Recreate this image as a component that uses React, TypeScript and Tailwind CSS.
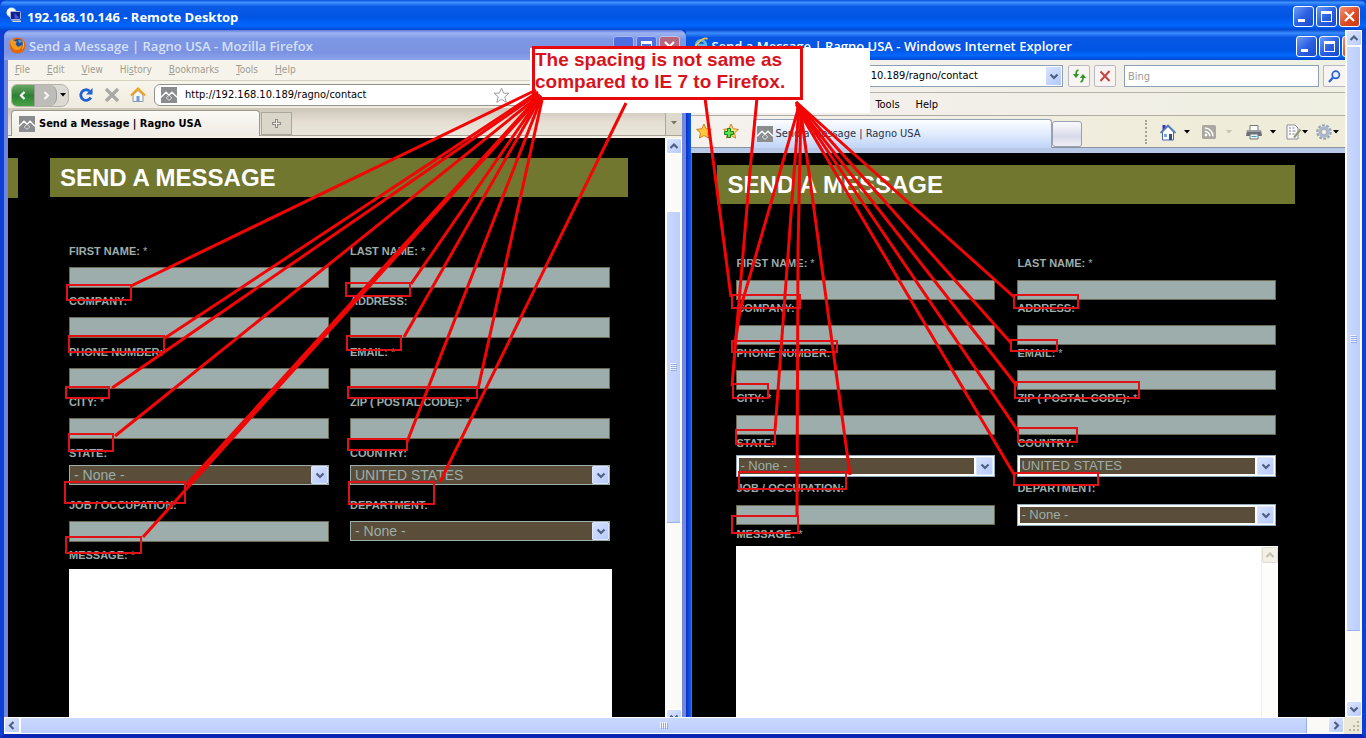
import React from "react";

const UI = "font-['DejaVu_Sans_Condensed','DejaVu_Sans',sans-serif]";
const CAPTION = "font-['Open_Sans','Noto_Sans',sans-serif]";
const ARIAL = "font-['Liberation_Sans',Arial,sans-serif]";

/* ---------- small drawings ---------- */

function SiteIcon() {
  return (
    <svg width="16" height="16" viewBox="0 0 16 16" className="shrink-0" aria-hidden="true">
      <rect width="16" height="16" fill="#8b8c8e" />
      <path d="M0 10.200 5 5.200 8 8.200 11 5.200 16 10.200" fill="none" stroke="#fff" strokeWidth="1.400" />
      <path d="M5.200 11 8 8.200 10.800 11 8 13.400z" fill="none" stroke="#dcdcdc" strokeWidth="1" />
    </svg>
  );
}

function Chevron({ dir = "down", color = "#4d6185" }: { dir?: "up" | "down" | "left" | "right"; color?: string }) {
  const d = {
    down: "M1.500 2.500 5 6l3.500-3.500",
    up: "M1.500 6 5 2.500 8.500 6",
    left: "M6.500 1 3 4.500 6.500 8",
    right: "M3.500 1 7 4.500 3.500 8",
  }[dir];
  return (
    <svg width="10" height="9" viewBox="0 0 10 9" className="shrink-0" aria-hidden="true">
      <path d={d} fill="none" stroke={color} strokeWidth="2.200" />
    </svg>
  );
}

function Caret({ color = "#000" }: { color?: string }) {
  return (
    <svg width="6" height="4" viewBox="0 0 6 4" className="shrink-0" aria-hidden="true">
      <path d="M0 0h6L3 3.500z" fill={color} />
    </svg>
  );
}

function RemoteIcon() {
  return (
    <svg width="16" height="16" viewBox="0 0 16 16" aria-hidden="true">
      <circle cx="5.500" cy="5.500" r="5" fill="#d3e8dc" />
      <path d="M1 4c2-3.500 6-3.500 8-.5L5 8 1.500 8z" fill="#fff" />
      <rect x="4.500" y="4.500" width="10" height="8" rx="1" fill="#14208a" stroke="#a9b4e0" />
      <path d="M8.500 6v5.500h5.500z" fill="#3d55d8" />
      <path d="M5 13.500h10V15H7z" fill="#d8d4c8" />
    </svg>
  );
}

function FirefoxIcon() {
  return (
    <svg width="17" height="17" viewBox="0 0 17 17" aria-hidden="true">
      <circle cx="8.500" cy="8.500" r="8" fill="#e2660e" />
      <circle cx="9" cy="7" r="5" fill="#1d4f9c" />
      <path d="M9 2.500c2 0 3.500 1 4.300 2.500L10 6z" fill="#4fa0dd" />
      <path d="M1 4 3 1.500 4.500 4 8 4.500 6.500 7l2 2.500c2 .5 3-.5 4-2 1 3-1.500 5.500-4.500 5.500C4.500 13 2 10 1 4z" fill="#f39a1e" />
      <path d="M13.500 3c2 3 2 7-.5 9.500 1-3 1.200-6 .5-9.500z" fill="#fbd03c" />
    </svg>
  );
}

function IeIcon() {
  return (
    <svg width="16" height="16" viewBox="0 0 16 16" aria-hidden="true">
      <path d="M12.500 10.500A5 5 0 1 1 13 8H5" fill="none" stroke="#5db5f2" strokeWidth="2.600" />
      <path d="M2 14C-.5 11 9-.5 14.500 1.800" fill="none" stroke="#f4c63a" strokeWidth="1.800" />
    </svg>
  );
}

function Star({ plus = false }: { plus?: boolean }) {
  return (
    <svg width="16" height="17" viewBox="0 0 16 17" aria-hidden="true">
      <path d="M8 1l2.200 4.800 5.200.6-3.900 3.500 1.100 5.200L8 12.500l-4.600 2.600 1.100-5.200L.6 6.400l5.200-.6z" fill={plus ? "#ffe08a" : "#ffc83d"} stroke="#c9831c" strokeWidth="1" />
      {plus && <path d="M4.500 5.500h3v3h3v3h-3v3h-3v-3h-3v-3h3z" fill="#5fe054" stroke="#14821a" strokeWidth="1" />}
    </svg>
  );
}

function Reload() {
  return (
    <svg width="16" height="16" viewBox="0 0 16 16" aria-hidden="true">
      <path d="M12.800 10.500A5.300 5.300 0 1 1 11.500 4" fill="none" stroke="#1f62d2" strokeWidth="2.800" />
      <path d="M14.500 1v6.500H8z" fill="#1f62d2" />
    </svg>
  );
}

function StopCross() {
  return (
    <svg width="16" height="16" viewBox="0 0 16 16" aria-hidden="true">
      <path d="M2 2l12 12M14 2L2 14" stroke="#a9a9a5" strokeWidth="3.200" />
    </svg>
  );
}

function HomeFx() {
  return (
    <svg width="16" height="16" viewBox="0 0 16 16" aria-hidden="true">
      <path d="M3 8v6.500h10V8L8 3.500z" fill="#f7f5ef" stroke="#8b96a8" />
      <rect x="6.500" y="9" width="3" height="5.500" fill="#6d9be0" />
      <path d="M1 8.500 8 1.500l7 7" fill="none" stroke="#f0a41c" strokeWidth="2.200" />
    </svg>
  );
}

function HomeIe() {
  return (
    <svg width="16" height="17" viewBox="0 0 16 17" aria-hidden="true">
      <rect x="2.500" y="1" width="3" height="5" fill="#3434b8" />
      <path d="M2.500 8v8h11V8L8 2.500z" fill="#fff" stroke="#4c66a8" />
      <path d="M.5 9 8 1.500 15.500 9" fill="none" stroke="#4f79b8" strokeWidth="1.600" />
      <rect x="4" y="10" width="3" height="3" fill="#7ea6d8" />
      <rect x="9" y="10" width="3" height="6" fill="#2b4f9c" />
    </svg>
  );
}

function Rss() {
  return (
    <svg width="14" height="14" viewBox="0 0 14 14" aria-hidden="true">
      <rect width="14" height="14" rx="1.500" fill="#a9a89e" />
      <circle cx="4" cy="10" r="1.400" fill="#fff" />
      <path d="M2.800 6.200a5 5 0 0 1 5 5M2.800 3a8.200 8.200 0 0 1 8.200 8.200" fill="none" stroke="#fff" strokeWidth="1.400" />
    </svg>
  );
}

function Printer() {
  return (
    <svg width="16" height="15" viewBox="0 0 16 15" aria-hidden="true">
      <path d="M4 .5h8v5H4z" fill="#fff" stroke="#777" />
      <path d="M1 5h14l1 6H0z" fill="#6d6f74" />
      <rect x="1" y="5" width="14" height="2" fill="#9b9da1" />
      <path d="M4 9h8v5H4z" fill="#e8f2fb" stroke="#777" />
      <path d="M5.500 11.500h5" stroke="#39a8c8" />
    </svg>
  );
}

function PageIcon() {
  return (
    <svg width="16" height="16" viewBox="0 0 16 16" aria-hidden="true">
      <path d="M1 1h8l3 3v11H1z" fill="#fafafa" stroke="#8a8f9c" />
      <path d="M3 4h2M3 7h2M3 10h2M6.500 4h2M6.500 7h3M6.500 10h2" stroke="#7b7fa5" />
      <path d="M14.500 5.500 8 13.500" stroke="#9c9a78" strokeWidth="2.200" />
    </svg>
  );
}

function Gear() {
  return (
    <svg width="16" height="16" viewBox="0 0 16 16" aria-hidden="true">
      <circle cx="8" cy="8" r="6.700" fill="none" stroke="#94a2b5" strokeWidth="2.200" strokeDasharray="2.700 1.510" />
      <circle cx="8" cy="8" r="4.500" fill="#f2efe2" stroke="#a9b8cb" strokeWidth="2.600" />
      <circle cx="8" cy="8" r="2.900" fill="none" stroke="#73839a" strokeWidth=".7" />
    </svg>
  );
}

function RefreshIe() {
  return (
    <svg width="15" height="14" viewBox="0 0 15 14" aria-hidden="true">
      <path d="M6.500 1C4.500 1.500 4 3 4 5v1" fill="none" stroke="#2f9627" strokeWidth="1.600" />
      <path d="M.8 5h6.400L4 9z" fill="#2f9627" />
      <path d="M8.500 13c2-.5 2.500-2 2.500-4V8" fill="none" stroke="#2f9627" strokeWidth="1.600" />
      <path d="M7.800 9h6.400L11 5z" fill="#2f9627" />
    </svg>
  );
}

/* ---------- window parts ---------- */

type WinKind = "min" | "max" | "close";

function CaptionButton({ kind, faded = false }: { kind: WinKind; faded?: boolean }) {
  const tone =
    kind === "close"
      ? faded
        ? "bg-[#b8687e] border-[#b9c5f2]"
        : "bg-[linear-gradient(135deg,#f0957a,#dd4a22_55%,#c83c14)] border-white"
      : faded
        ? "bg-[#4f6fe0] border-[#a9b9f2]"
        : "bg-[linear-gradient(135deg,#6f9cf5,#2c61e2_50%,#1a49cf)] border-white";
  return (
    <button type="button" aria-label={kind} className={`flex size-[21px] shrink-0 items-center justify-center rounded-[3px] border ${tone}`}>
      <svg width="19" height="19" viewBox="0 0 19 19" aria-hidden="true">
        {kind === "min" && <rect x="4" y="12" width="7" height="3" fill="#fff" />}
        {kind === "max" && <path d="M4 4h11v11H4zM5 7v7h9V7z" fill="#fff" fillRule="evenodd" />}
        {kind === "close" && <path d="M5 5l9 9M14 5l-9 9" stroke="#fff" strokeWidth="2.200" />}
      </svg>
    </button>
  );
}

function ScrollButton({ dir, muted = false }: { dir: "up" | "down" | "left" | "right"; muted?: boolean }) {
  return (
    <button
      type="button"
      aria-label={`Scroll ${dir}`}
      className={`flex size-[16px] shrink-0 items-center justify-center rounded-[2px] border ${
        muted ? "border-[#dedbd0] bg-[#f1efe6]" : "border-white bg-[linear-gradient(135deg,#dbe5fd,#b9cbf9)]"
      }`}
    >
      <Chevron dir={dir} color={muted ? "#c3c0b4" : "#4d6185"} />
    </button>
  );
}

function VThumb() {
  return (
    <div className="flex w-full flex-1 items-center justify-center rounded-[2px] border border-white border-b-[#98b0e8] bg-[linear-gradient(90deg,#cad8fd,#bccefc)]">
      <svg width="7" height="8" viewBox="0 0 7 8" aria-hidden="true">
        <path d="M0 .5h6M0 2.500h6M0 4.500h6M0 6.500h6" stroke="#eef3ff" />
        <path d="M1 1.500h6M1 3.500h6M1 5.500h6M1 7.500h6" stroke="#93abe4" />
      </svg>
    </div>
  );
}

function SelectBox({ id, value, ie }: { id: string; value: string; ie: boolean }) {
  return (
    <div className={ie ? "flex h-[22px] w-full border border-[#8fa9bd] bg-white p-px" : "flex h-[20px] w-full border border-[#9cadab] bg-[#5a4d39]"}>
      <select
        id={id}
        defaultValue={value}
        className={`${ARIAL} min-w-0 flex-1 appearance-none bg-[#5a4d39] leading-4 text-[#9cadab] outline-none ${ie ? "m-px mr-0.5 pl-px text-[13px]" : "pl-1 text-[14px]"}`}
      >
        <option>{value}</option>
      </select>
      <span className="pointer-events-none flex w-[17px] items-center justify-center rounded-[1px] border border-[#dbe5fb] bg-[linear-gradient(135deg,#d5e1fd,#b7cafa)]">
        <Chevron />
      </span>
    </div>
  );
}

type FieldDef = { label: string; req?: boolean; select?: string };

function Field({ def, ie, pad, gap }: { def: FieldDef; ie: boolean; pad: string; gap: string }) {
  const id = `${ie ? "ie" : "fx"}-${def.label.toLowerCase().replace(/[^a-z]+/g, "-")}`;
  return (
    <div className={`flex flex-col ${pad}`}>
      <label htmlFor={id} className="block text-[11px] leading-4 font-bold">
        {def.label}:{def.req && <span className="font-normal"> *</span>}
      </label>
      <div className={`flex ${gap} ${ie ? "h-[22px] items-center" : "h-[21px] items-start"}`}>
        {def.select ? (
          <SelectBox id={id} value={def.select} ie={ie} />
        ) : (
          <input
            id={id}
            type="text"
            className={`w-full border border-[#6d6a55] bg-[#9cadab] px-1 text-[12px] text-black outline-none ${ie ? "h-[20px]" : "h-[21px]"}`}
          />
        )}
      </div>
    </div>
  );
}

const fields: FieldDef[] = [
  { label: "FIRST NAME", req: true },
  { label: "LAST NAME", req: true },
  { label: "COMPANY" },
  { label: "ADDRESS" },
  { label: "PHONE NUMBER" },
  { label: "EMAIL", req: true },
  { label: "CITY", req: true },
  { label: "ZIP ( POSTAL CODE)", req: true },
  { label: "STATE", select: "- None -" },
  { label: "COUNTRY", select: "UNITED STATES" },
  { label: "JOB / OCCUPATION" },
  { label: "DEPARTMENT", select: "- None -" },
];

const fxPad = ["pt-[5px]", "pt-[5px]", "pt-[5px]", "pt-[5px]", "pt-[5px]", "pt-[11px]"];
const iePad = ["pt-0", "pt-0", "pt-0", "pt-0", "pt-0", "pt-[3px]"];
const rowGap = ["mt-2", "mt-2", "mt-2", "mt-2", "mt-1", "mt-2"];

function ContactForm({ ie }: { ie: boolean }) {
  const pads = ie ? iePad : fxPad;
  return (
    <form className={`${ARIAL} ml-[19px] flex flex-1 flex-col text-[#9cadab] ${ie ? "w-[542px] pt-[51px]" : "w-[543px] pt-[41px]"}`}>
      <div
        className={`grid ${
          ie
            ? "grid-cols-[259px_259px] grid-rows-[45px_45px_45px_45px_42px_49px] gap-x-[22px]"
            : "grid-cols-[260px_260px] grid-rows-[50px_51px_50px_51px_46px_56px] gap-x-[21px]"
        }`}
      >
        {fields.map((f, i) => (
          <Field key={f.label} def={f} ie={ie} pad={pads[i >> 1]} gap={rowGap[i >> 1]} />
        ))}
      </div>
      <label htmlFor={ie ? "ie-message" : "fx-message"} className={`text-[11px] leading-4 font-bold ${ie ? "mb-1" : "mt-[5px] mb-1.5"}`}>
        MESSAGE:<span className="font-normal"> *</span>
      </label>
      <div className="flex min-h-[60px] flex-1 bg-white">
        <textarea id={ie ? "ie-message" : "fx-message"} className="min-w-0 flex-1 resize-none bg-white p-1 text-[12px] text-black outline-none" />
        {ie && (
          <div className="flex w-[17px] flex-col border-l border-[#f0efea] bg-[#fdfdfb] pt-px">
            <ScrollButton dir="up" muted />
          </div>
        )}
      </div>
    </form>
  );
}

function PageTitle() {
  return (
    <h1 className={`${ARIAL} flex h-[39px] w-[578px] items-center bg-[#72772f] pl-2.5 text-[24px] leading-6 font-bold text-white`}>SEND A MESSAGE</h1>
  );
}

/* ---------- Firefox ---------- */

function FirefoxWindow() {
  const menu = ["File", "Edit", "View", "History", "Bookmarks", "Tools", "Help"];
  return (
    <section className="flex min-w-0 flex-[681] flex-col overflow-hidden rounded-t-[7px] bg-[linear-gradient(90deg,#6f86e0,#7288dd)] px-1">
      <header className="-mx-1 flex h-[30px] shrink-0 items-center bg-[linear-gradient(180deg,#5f7ad8,#9db4f2_10%,#7e97e4_30%,#7b93e2_75%,#8ba4ec)] pr-1.5 pl-[5px]">
        <FirefoxIcon />
        <h2 className={`${CAPTION} flex-1 pt-0.5 pl-[3px] text-[13px] leading-4 font-semibold whitespace-nowrap text-[#d5e1fa]`}>
          Send a Message | Ragno USA - Mozilla Firefox
        </h2>
        <div className="flex gap-0.5 pt-0.5">
          <CaptionButton kind="min" faded />
          <CaptionButton kind="max" faded />
          <CaptionButton kind="close" faded />
        </div>
      </header>

      <nav className={`${UI} flex h-[21px] shrink-0 items-center gap-[17px] border-b border-[#d5d1c0] bg-[#f6f3ea] pl-[7px] text-[10px] leading-4 text-[#a09d90]`}>
        {menu.map((m) => (
          <a key={m} href="#" className="whitespace-nowrap">
            {m === "History" ? (
              <>
                Hi<u>s</u>tory
              </>
            ) : (
              <>
                <u>{m[0]}</u>
                {m.slice(1)}
              </>
            )}
          </a>
        ))}
      </nav>

      <div className="flex h-[27px] shrink-0 items-center bg-[linear-gradient(180deg,#f7f4ec,#efebde)] pt-px pl-[3px]">
        <div className="flex h-[23px] w-[58px] items-center overflow-hidden rounded-l-[6px] rounded-r-[8px] border border-[#b5b3aa] bg-[#dcdad2]">
          <button type="button" aria-label="Back" className="flex h-full w-[22px] items-center justify-center bg-[linear-gradient(180deg,#69a763,#2f8034_50%,#46a344)]">
            <Chevron dir="left" color="#fff" />
          </button>
          <button type="button" aria-label="Forward" className="flex h-full w-[23px] items-center justify-center rounded-r-[8px] border-x border-[#9d9c96] bg-[#bdbcb8]">
            <Chevron dir="right" color="#f4f4f2" />
          </button>
          <span className="flex flex-1 justify-center">
            <Caret />
          </span>
        </div>
        <div className="flex gap-[10px] pl-[9px]">
          <Reload />
          <StopCross />
          <HomeFx />
        </div>
        <div className="ml-2 flex h-[22px] w-[480px] items-center rounded-l-[6px] border border-[#96938a] bg-white pl-1.5">
          <SiteIcon />
          <input
            aria-label="Location"
            defaultValue="http://192.168.10.189/ragno/contact"
            className={`${UI} ml-2 w-[308px] bg-transparent text-[11px] leading-4 text-black outline-none`}
          />
          <svg width="17" height="17" viewBox="0 0 17 17" aria-hidden="true">
            <path d="M8.500 1.200l2.200 5h5.200l-4.100 3.600 1.400 5.500-4.700-3-4.700 3 1.400-5.500L1.100 6.200h5.200z" fill="#fff" stroke="#9b9b9b" />
          </svg>
        </div>
      </div>

      <div className="flex h-[30px] shrink-0 items-end justify-between border-b-2 border-[#f3f0e4] bg-[linear-gradient(180deg,#cbc6b8,#e4dfd2_50%,#ebe7dc)] shadow-[inset_0_-1px_0_#a9a598]">
        <div className="flex items-end">
          <button
            type="button"
            className={`${UI} ml-[3px] flex h-[26px] w-[249px] items-center gap-1 rounded-t-[4px] border border-b-0 border-[#9a968a] bg-[linear-gradient(180deg,#fbfaf6,#eeebe2)] pl-[7px] text-[11px] leading-4 font-bold whitespace-nowrap text-black`}
          >
            <SiteIcon />
            Send a Message | Ragno USA
          </button>
          <button type="button" aria-label="New tab" className="mb-px ml-px flex h-[23px] w-[31px] items-center justify-center border border-[#aba799] bg-[#dad6ca]">
            <svg width="9" height="9" viewBox="0 0 9 9" aria-hidden="true">
              <path d="M3 0h3v3h3v3H6v3H3V6H0V3h3z" fill="#8e8b82" />
              <path d="M4 1h1v3h3v1H5v3H4V5H1V4h3z" fill="#f2f0ea" />
            </svg>
          </button>
        </div>
        <button type="button" aria-label="List all tabs" className="mb-px flex h-[24px] w-[17px] items-center justify-center border-l border-[#aba799] bg-[#dedace]">
          <Caret color="#77746a" />
        </button>
      </div>

      <div className="flex min-h-0 flex-1">
        <main className="flex min-w-0 flex-1 bg-black pt-5">
          <div className="h-10 w-2.5 shrink-0 bg-[#72772f]" />
          <div className="ml-8 flex flex-col">
            <PageTitle />
            <ContactForm ie={false} />
          </div>
        </main>
        <div className="flex w-[17px] shrink-0 flex-col bg-[#fbfaf7] px-px">
          <ScrollButton dir="up" />
          <div className="flex-[57]" />
          <div className="flex flex-[312] flex-col">
            <VThumb />
          </div>
          <div className="flex-[186]" />
          <div className="h-2 overflow-hidden">
            <ScrollButton dir="down" />
          </div>
        </div>
      </div>
    </section>
  );
}

/* ---------- Internet Explorer ---------- */

function IeWindow() {
  return (
    <section className="flex min-w-0 flex-[660] flex-col overflow-hidden bg-[linear-gradient(90deg,#0a2fc0,#0f5cf0_5px)] pl-[5px]">
      <header className="-ml-[5px] flex h-[30px] shrink-0 items-center bg-[linear-gradient(180deg,#0a4fd0,#3a8cff_10%,#0a57e4_25%,#0055e5_65%,#0267fb_85%,#0048d4)] pl-[7px]">
        <IeIcon />
        <h2 className={`${CAPTION} min-w-0 flex-1 overflow-hidden pt-0.5 pl-0.5 text-[13px] leading-4 font-semibold whitespace-nowrap text-white`}>
          Send a Message | Ragno USA - Windows Internet Explorer
        </h2>
        <div className="-mr-[18px] flex shrink-0 gap-0.5 pt-0.5">
          <CaptionButton kind="min" />
          <CaptionButton kind="max" />
          <CaptionButton kind="close" />
        </div>
      </header>

      <div className="flex h-[33px] shrink-0 items-center overflow-hidden border-b border-[#b5b2a8] bg-[linear-gradient(90deg,#f5efee,#efefe2)] pl-[60px]">
        <div className="flex h-[22px] min-w-0 flex-1 items-center border border-[#8ba0b4] bg-white pr-px">
          <input
            aria-label="Address"
            defaultValue="http://192.168.10.189/ragno/contact"
            className={`${UI} min-w-0 flex-1 bg-white pl-[44px] text-[11px] leading-4 text-black outline-none`}
          />
          <span className="flex h-[18px] w-[15px] items-center justify-center bg-[linear-gradient(135deg,#d8e4fd,#b4c8fa)]">
            <Chevron />
          </span>
        </div>
        <button type="button" aria-label="Refresh" className="ml-[5px] flex size-[22px] shrink-0 items-center justify-center rounded-[2px] border border-[#b8b8c4] bg-[#f7f4f2]">
          <RefreshIe />
        </button>
        <button type="button" aria-label="Stop" className="ml-1 flex size-[22px] shrink-0 items-center justify-center rounded-[2px] border border-[#b8b8c4] bg-[#f7f4f2]">
          <svg width="12" height="12" viewBox="0 0 12 12" aria-hidden="true">
            <path d="M1.500 1.500 10.500 11M10.500 1 1.500 11" stroke="#c9453f" strokeWidth="2" />
          </svg>
        </button>
        <input
          aria-label="Search"
          placeholder="Bing"
          className={`${UI} ml-2 h-[22px] w-[195px] shrink-0 border border-[#8ba0b4] bg-white pl-[3px] text-[11px] text-black outline-none placeholder:text-[#9b9b93]`}
        />
        <button type="button" aria-label="Go" className="ml-1 flex h-[22px] w-[22px] shrink-0 items-center justify-center rounded-l-[2px] border border-r-0 border-[#b8b8c4] bg-[#f7f4f2]">
          <svg width="13" height="13" viewBox="0 0 13 13" aria-hidden="true">
            <circle cx="7.800" cy="4.800" r="3.600" fill="#e8f0ff" stroke="#2b62d0" strokeWidth="1.700" />
            <path d="M5 7.500 1 12" stroke="#2b62d0" strokeWidth="2.200" />
          </svg>
        </button>
      </div>

      <nav className={`${UI} flex h-[23px] shrink-0 items-center gap-4 border-b border-[#aeaba2] bg-[linear-gradient(90deg,#f5efee,#efefe2)] pt-px pl-[184px] text-[11px] leading-4 text-black`}>
        <a href="#">Tools</a>
        <a href="#">Help</a>
      </nav>

      <div className="flex h-[37px] shrink-0 items-start justify-between border-b-[5px] border-[#b7c9e6] bg-[linear-gradient(90deg,#f5f1ee,#efecd9_80%)] shadow-[inset_0_-1px_0_#8a93a0]">
        <div className="flex min-w-0 flex-1">
          <div className="flex shrink-0 gap-[11px] pt-[7px] pl-[5px]">
            <Star />
            <Star plus />
          </div>
          <button
            type="button"
            className={`${UI} mt-[3px] ml-[14px] flex h-[29px] max-w-[299px] min-w-0 flex-1 items-center gap-0.5 overflow-hidden rounded-t-[3px] border border-b-0 border-[#94a3b8] bg-[linear-gradient(180deg,#fdfeff,#e3edfd_45%,#c0d4f8)] pl-[3px] text-[11px] leading-4 whitespace-nowrap text-[#26344c]`}
          >
            <SiteIcon />
            Send a Message | Ragno USA
          </button>
          <button type="button" aria-label="New tab" className="mt-[5px] h-[26px] w-[30px] shrink-0 rounded-[3px] border border-[#9a9fb0] bg-[linear-gradient(180deg,#fbfbfd,#d8daea_60%,#eeeef4)]" />
        </div>
        <div className="mt-1 flex h-[24px] shrink-0 items-center border-l-2 border-dotted border-[#a5a396] pr-1.5 pl-[13px]">
          <HomeIe />
          <span className="mr-3 ml-2">
            <Caret />
          </span>
          <Rss />
          <span className="mr-3.5 ml-2.5">
            <Caret color="#c6c3b4" />
          </span>
          <Printer />
          <span className="mr-2.5 ml-2">
            <Caret />
          </span>
          <PageIcon />
          <span className="mr-2">
            <Caret />
          </span>
          <Gear />
          <span className="ml-px">
            <Caret />
          </span>
        </div>
      </div>

      <main className="flex min-h-0 min-w-0 flex-1 border-l border-[#6b7077] bg-black pt-3 pl-[25px]">
        <div className="flex flex-col">
          <PageTitle />
          <ContactForm ie />
        </div>
      </main>
    </section>
  );
}

/* ---------- review markup ---------- */

const pointers = [
  "M536 90 131 286", "M538 92 165 338", "M538 94 112 388", "M540 95 115 436", "M540 95 186 485", "M541 96 143 537",
  "M541 96 411 284", "M541 97 404 337", "M541 99 407 442", "M542 100 478 389", "M626 103 440 482",
  "M705 98 731 297", "M757 98 751 160 737 325 732 386", "M799 106 740 310 735 345", "M799 106 775 431", "M801 106 798 250 797 517",
  "M800 106 850 475", "M796 102 1014 297", "M796 102 1011 343", "M796 104 1017 386", "M797 106 1018 431", "M797 108 1015 476",
];

const marks: [number, number, number, number][] = [
  [67, 285, 131, 300], [69, 336, 164, 352], [66, 387, 109, 398], [69, 434, 113, 451], [65, 482, 185, 503], [66, 537, 141, 553],
  [346, 283, 410, 296], [347, 336, 401, 350], [348, 387, 477, 398], [348, 439, 407, 450], [349, 482, 434, 504],
  [732, 295, 800, 308], [732, 341, 837, 352], [733, 384, 768, 398], [736, 430, 775, 444], [739, 472, 846, 489], [732, 516, 798, 533],
  [1014, 295, 1078, 308], [1011, 340, 1057, 351], [1015, 382, 1139, 398], [1018, 428, 1077, 442], [1014, 473, 1098, 485],
];

function Markup() {
  return (
    <>
      <div className="absolute top-[48px] left-[530px] h-[65px] w-[340px] bg-white" />
      <p className={`${ARIAL} absolute top-[46px] left-[532px] h-[54px] w-[271px] border-[3px] border-[#e60a0f] bg-white text-[19px] leading-[22px] font-bold whitespace-nowrap text-[#d8141c]`}>
        The spacing is not same as
        <br />
        compared to IE 7 to Firefox.
      </p>
      <svg className="pointer-events-none absolute top-0 left-0" width="1366" height="738" viewBox="0 0 1366 738" fill="none" stroke="#f20505" aria-hidden="true">
        {pointers.map((d) => (
          <path key={d} d={d} strokeWidth="3" />
        ))}
        {marks.map(([x1, y1, x2, y2]) => (
          <rect key={`${x1}-${y1}`} x={x1} y={y1} width={x2 - x1} height={y2 - y1} strokeWidth="2" stroke="#e01216" />
        ))}
      </svg>
    </>
  );
}

/* ---------- remote desktop shell ---------- */

export default function App() {
  return (
    <div className="relative flex min-h-screen flex-col overflow-hidden bg-[#0a3fd6]">
      <header className="flex h-[30px] shrink-0 items-center rounded-t-[7px] bg-[linear-gradient(180deg,#0a50d8,#3f92ff_8%,#0a5ae6_22%,#0054e3_55%,#0066ff_85%,#0048d0)] pr-1.5 pl-1.5">
        <RemoteIcon />
        <h1 className={`${CAPTION} flex-1 pt-[3px] pl-[5px] text-[13px] leading-4 font-bold text-white`}>192.168.10.146 - Remote Desktop</h1>
        <div className="flex gap-0.5 pt-[3px]">
          <CaptionButton kind="min" />
          <CaptionButton kind="max" />
          <CaptionButton kind="close" />
        </div>
      </header>

      <div className="flex min-h-0 flex-1 flex-col border-x-4 border-b-4 border-[#0c3fd4] border-b-[#0a25b4]">
        <div className="flex min-h-0 flex-1">
          <div className="flex min-w-0 flex-1 bg-[#0a3fd6]">
            <FirefoxWindow />
            <IeWindow />
          </div>
          <div className="flex w-[17px] shrink-0 flex-col bg-[#fbfaf7] px-px">
            <ScrollButton dir="up" />
            <div className="flex flex-[585] flex-col">
              <VThumb />
            </div>
            <div className="flex-[70]" />
            <ScrollButton dir="down" />
          </div>
        </div>
        <div className="flex h-[17px] shrink-0 bg-[#fbfaf7]">
          <ScrollButton dir="left" />
          <div className="flex flex-[1286] items-center justify-center rounded-[2px] border border-white border-r-[#98b0e8] bg-[linear-gradient(180deg,#cad8fd,#bccefc)]">
            <svg width="8" height="7" viewBox="0 0 8 7" aria-hidden="true">
              <path d="M.5 0v6M2.500 0v6M4.500 0v6M6.500 0v6" stroke="#eef3ff" />
              <path d="M1.500 1v6M3.500 1v6M5.500 1v6M7.500 1v6" stroke="#93abe4" />
            </svg>
          </div>
          <div className="flex-[21]" />
          <ScrollButton dir="right" />
          <div className="flex w-[18px] items-end justify-end bg-[#ece9d8] p-0.5">
            <svg width="11" height="11" viewBox="0 0 11 11" aria-hidden="true">
              <path d="M8 0h2v2H8zM8 4h2v2H8zM8 8h2v2H8zM4 4h2v2H4zM4 8h2v2H4zM0 8h2v2H0z" fill="#b8b4a2" />
            </svg>
          </div>
        </div>
      </div>

      <Markup />
    </div>
  );
}
